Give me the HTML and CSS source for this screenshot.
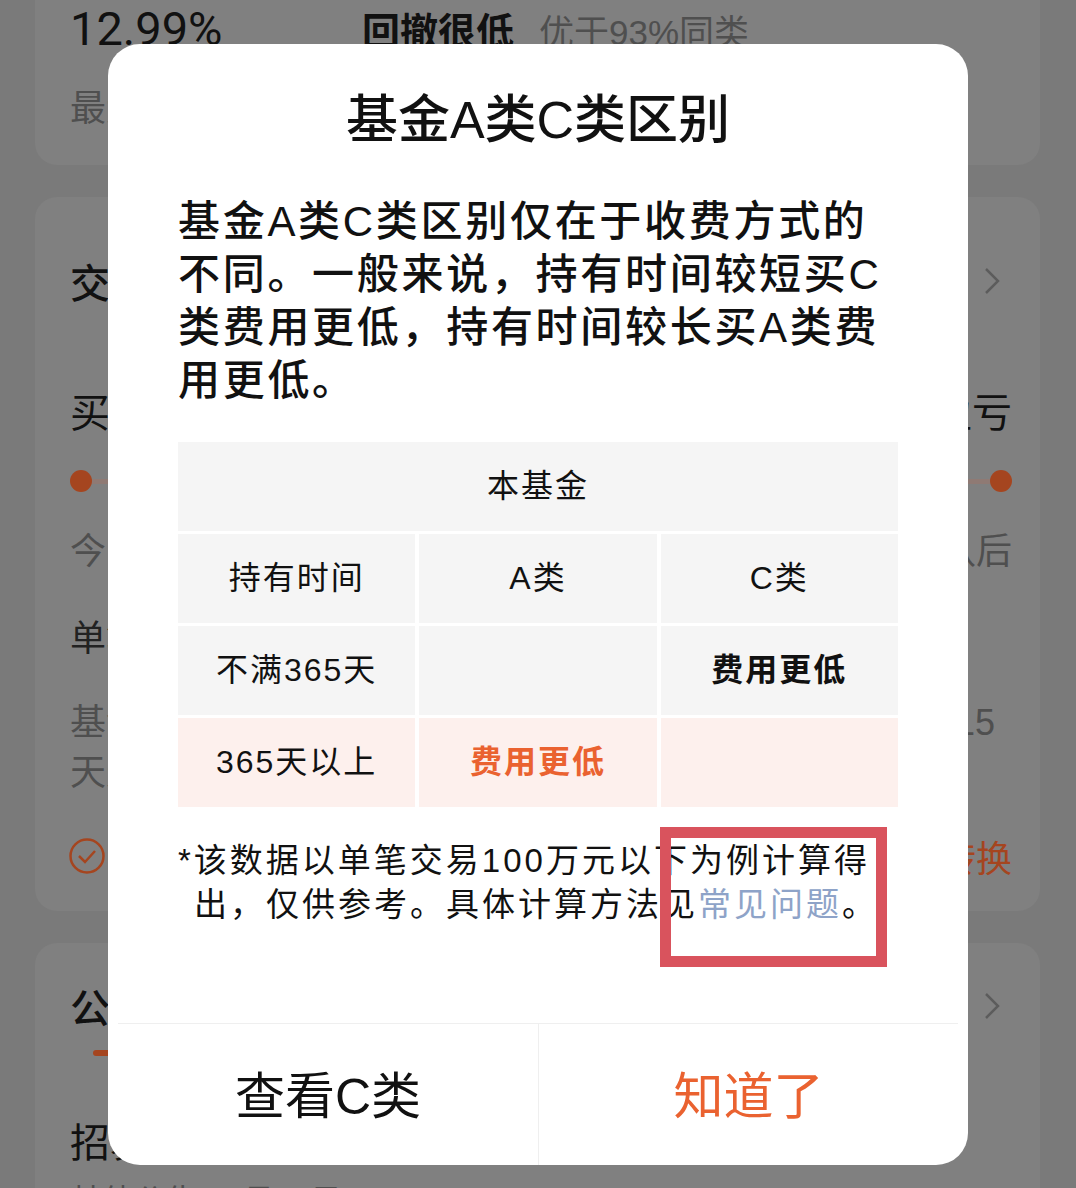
FILE: index.html
```html
<!DOCTYPE html>
<html lang="zh-CN">
<head>
    <meta charset="UTF-8">
    <meta name="viewport" content="width=device-width, initial-scale=1.0">
    <title>基金详情</title>
    <link rel="stylesheet" href="styles.css">
</head>
<body>

    <!-- fund detail page, sits dimmed under the dialog -->
    <div class="page">
        <section class="card card-summary">
            <div class="summary-row">
                <span class="rate">12.99%</span>
                <span class="summary-tag"><b>回撤很低</b><em>优于93%同类</em></span>
            </div>
            <div class="summary-sub">最大回撤</div>
        </section>

        <section class="card card-trade">
            <div class="card-head">
                <h2>交易规则</h2>
                <svg class="chevron" viewBox="0 0 16 28"><polyline points="2,2 14,14 2,26" /></svg>
            </div>
            <div class="trade-steps">
                <span>买入提交</span>
                <span>查看盈亏</span>
            </div>
            <div class="trade-track">
                <i class="dot"></i><i class="track-line"></i><i class="dot"></i>
            </div>
            <div class="trade-dates">
                <span>今日15:00前</span>
                <span>份额确认后</span>
            </div>
            <div class="trade-item">单笔限额</div>
            <div class="trade-fee">
                <span>基金费率<br>天天基金</span>
                <span class="fee-num">0.15</span>
            </div>
            <div class="trade-switch">
                <svg class="check" viewBox="0 0 38 38">
                    <circle cx="19" cy="19" r="16.5" />
                    <polyline points="11,19 17,25 27,14" />
                </svg>
                <span class="switch-link">一键转换</span>
            </div>
        </section>

        <section class="card card-notice">
            <div class="card-head">
                <h2>公告</h2>
                <svg class="chevron" viewBox="0 0 16 28"><polyline points="2,2 14,14 2,26" /></svg>
            </div>
            <i class="tab-bar"></i>
            <div class="notice-title">招募说明书</div>
            <div class="notice-meta">其他公告 07月27日</div>
        </section>
    </div>

    <div class="mask">
        <div class="dialog">
            <div class="dialog-body">
                <h1 class="dialog-title">基金A类C类区别</h1>
                <p class="dialog-text">基金A类C类区别仅在于收费方式的不同。一般来说，持有时间较短买C类费用更低，持有时间较长买A类费用更低。</p>

                <div class="fee-table">
                    <div class="fee-head">本基金</div>
                    <div>持有时间</div>
                    <div>A类</div>
                    <div>C类</div>
                    <div>不满365天</div>
                    <div></div>
                    <div class="fee-low">费用更低</div>
                    <div class="is-pink">365天以上</div>
                    <div class="is-pink fee-low accent">费用更低</div>
                    <div class="is-pink"></div>
                </div>

                <p class="dialog-note">*该数据以单笔交易100万元以下为例计算得出，仅供参考。具体计算方法见<a class="faq-link">常见问题</a>。</p>
            </div>

            <div class="dialog-actions">
                <button class="btn">查看C类</button>
                <button class="btn btn-ok">知道了</button>
            </div>

            <div class="mark"></div>
        </div>
    </div>

</body>
</html>
```

FILE: styles.css
```css
:root {
    --page-bg: #7a7a7a;
    --card-bg: #808080;
    --dim-text: #111111;
    --dim-muted: #4f4f4f;
    --dim-accent: #a5451f;
    --accent: #ea6230;
    --cell-bg: #f5f5f5;
    --cell-pink: #fdf0ed;
    --line: #efefef;
}

* {
    margin: 0;
    padding: 0;
    box-sizing: border-box;
}

body {
    position: relative;
    width: 1076px;
    height: 1188px;
    overflow: hidden;
    background-color: var(--page-bg);
    color: var(--dim-text);
    font-family: "Liberation Sans", "Noto Sans CJK SC", sans-serif;
}

/* page behind the dialog (already dimmed colours) */

.page {
    display: flex;
    flex-direction: column;
    gap: 32px;
    padding: 0 36px 0 35px;
}

.card {
    background-color: var(--card-bg);
    border-radius: 22px;
    padding: 0 28px 0 35px;
}

.card-summary {
    margin-top: -40px;
    padding-top: 46px;
    padding-bottom: 36px;
}

.summary-row {
    display: flex;
    align-items: center;
    height: 44px;
}

.rate {
    width: 292px;
    font-family: Roboto, sans-serif;
    font-size: 47px;
}

.summary-tag b {
    font-size: 38px;
    font-weight: 700;
}

.summary-tag em {
    font-style: normal;
    font-size: 35px;
    color: var(--dim-muted);
    margin-left: 25px;
}

.summary-sub {
    margin-top: 39px;
    height: 40px;
    font-size: 36px;
    line-height: 40px;
    color: var(--dim-muted);
}

.card-trade {
    padding-top: 62px;
    padding-bottom: 35px;
}

.card-head {
    display: flex;
    justify-content: space-between;
    align-items: center;
    height: 44px;
}

.card-head h2 {
    font-size: 40px;
    font-weight: 500;
}

.chevron {
    width: 16px;
    height: 28px;
    margin-right: 12px;
    fill: none;
    stroke: #5c5c5c;
    stroke-width: 2.5;
}

.trade-steps {
    display: flex;
    justify-content: space-between;
    align-items: center;
    margin-top: 85px;
    height: 44px;
    font-size: 40px;
}

.trade-track {
    display: flex;
    align-items: center;
    margin-top: 38px;
    height: 22px;
}

.dot {
    width: 22px;
    height: 22px;
    border-radius: 50%;
    background-color: var(--dim-accent);
}

.track-line {
    flex: 1;
    height: 5px;
    background-color: #8f7a74;
}

.trade-dates {
    display: flex;
    justify-content: space-between;
    align-items: center;
    margin-top: 36px;
    height: 40px;
    font-size: 36px;
    color: var(--dim-muted);
}

.trade-item {
    margin-top: 51px;
    height: 40px;
    line-height: 40px;
    font-size: 36px;
    color: #222;
}

.trade-fee {
    display: flex;
    justify-content: space-between;
    align-items: flex-start;
    margin-top: 39px;
    font-size: 36px;
    line-height: 50px;
    color: var(--dim-muted);
}

.fee-num {
    margin-right: 17px;
}

.trade-switch {
    display: flex;
    justify-content: space-between;
    align-items: center;
    margin-top: 38px;
    height: 40px;
}

.check {
    width: 38px;
    height: 38px;
    margin-left: -2px;
    fill: none;
    stroke: var(--dim-accent);
    stroke-width: 2.5;
}

.switch-link {
    font-size: 36px;
    color: var(--dim-accent);
}

.card-notice {
    padding-top: 41px;
    padding-bottom: 40px;
}

.tab-bar {
    display: block;
    width: 18px;
    height: 6px;
    margin: 22px 0 0 23px;
    border-radius: 3px;
    background-color: var(--dim-accent);
}

.notice-title {
    margin-top: 65px;
    height: 44px;
    line-height: 44px;
    font-size: 40px;
}

.notice-meta {
    margin-top: 10px;
    font-size: 32px;
    color: var(--dim-muted);
}

/* dialog */

.mask {
    position: absolute;
    inset: 0;
    display: flex;
    justify-content: center;
    align-items: flex-start;
    padding-top: 44px;
}

.dialog {
    position: relative;
    display: flex;
    flex-direction: column;
    width: 860px;
    height: 1121px;
    background-color: #fff;
    border-radius: 32px;
    overflow: hidden;
    color: #111;
}

.dialog-body {
    flex: 1;
    padding: 48px 70px 0;
}

.dialog-title {
    font-size: 52px;
    line-height: 56px;
    font-weight: 500;
    text-align: center;
}

.dialog-text {
    margin-top: 47px;
    font-size: 42px;
    line-height: 53px;
    letter-spacing: 2.7px;
    font-weight: 500;
}

.fee-table {
    display: grid;
    grid-template-columns: repeat(3, 1fr);
    grid-template-rows: repeat(4, 89px);
    gap: 3px 4px;
    margin-top: 35px;
    font-size: 32px;
    letter-spacing: 2px;
}

.fee-table > div {
    display: flex;
    align-items: center;
    justify-content: center;
    padding-bottom: 7px;
    background-color: var(--cell-bg);
}

.fee-table > .fee-head {
    grid-column: 1 / -1;
}

.fee-table > .is-pink {
    background-color: var(--cell-pink);
}

.fee-low {
    font-weight: 700;
}

.fee-low.accent {
    color: var(--accent);
}

.dialog-note {
    margin-top: 32px;
    padding-left: 16px;
    text-indent: -16px;
    font-size: 33px;
    line-height: 44px;
    letter-spacing: 3px;
}

.faq-link {
    color: #8ea3c8;
}

.dialog-actions {
    display: grid;
    grid-template-columns: 1fr 1fr;
    height: 142px;
    margin: 0 10px;
    border-top: 1px solid var(--line);
}

.btn {
    border: 0;
    background: none;
    padding-bottom: 6px;
    font-family: inherit;
    font-size: 50px;
    color: #111;
}

.btn-ok {
    border-left: 1px solid var(--line);
    color: var(--accent);
}

.mark {
    position: absolute;
    left: 552px;
    top: 783px;
    width: 227px;
    height: 140px;
    border: 11px solid #d9535d;
    pointer-events: none;
}
```
